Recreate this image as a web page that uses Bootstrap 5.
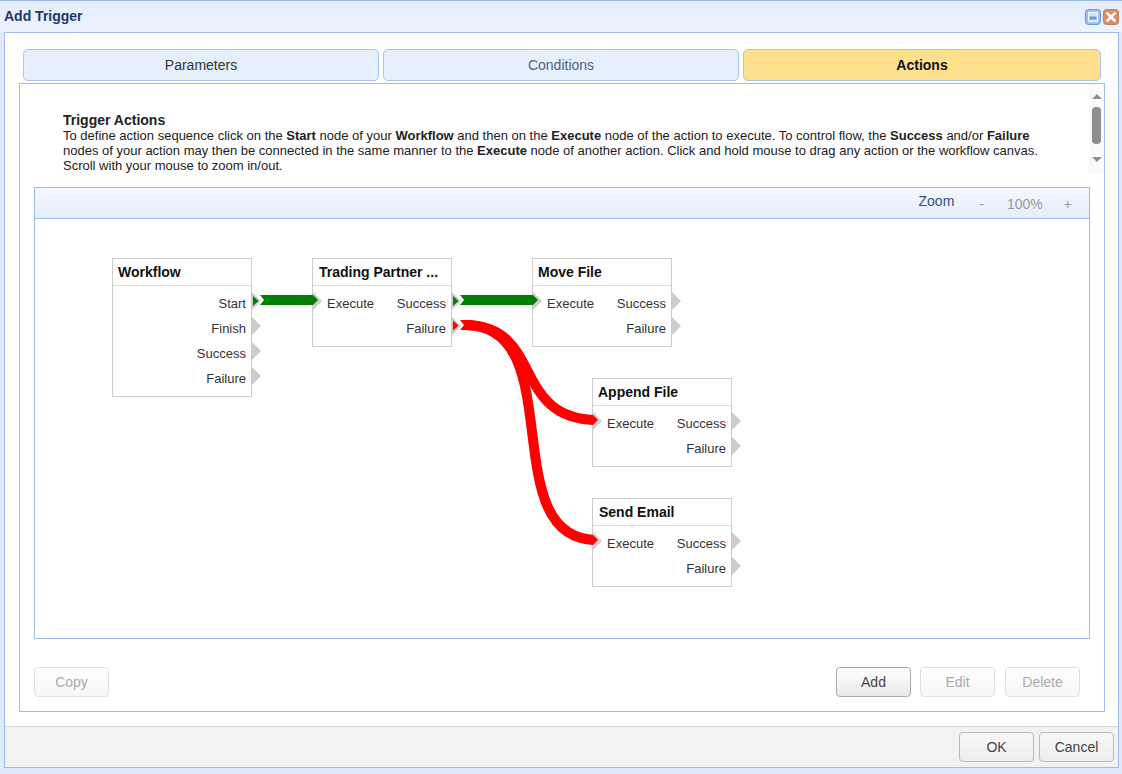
<!DOCTYPE html>
<html lang="en"><head><meta charset="utf-8"><title>Add Trigger</title>
<link href="https://cdn.jsdelivr.net/npm/bootstrap@5.3.0/dist/css/bootstrap.min.css" rel="stylesheet">
<style>
html,body{height:100%;margin:0;overflow:hidden;background:#dfeafc;font-family:"Liberation Sans",Arial,sans-serif;color:#333}
.dlg{width:1122px;height:774px;border-top:1px solid #9dbcea;background:#dfeafc}
.dlg-title{height:31px;padding:0 3px 0 4px;background:linear-gradient(#e4edfc,#edf3fe)}
.dlg-title h1{font-size:14px;font-weight:700;color:#1d3769;margin:0}
.win-btns{gap:2px}
.win-ico{width:16px;height:16px;display:block}
.dlg-main{width:1115px;height:736px;margin-left:4px;border:1px solid #9dbcea;background:#fff}
.dlg-body{height:693px;padding:16px 13px 14px 14px}
.tab-row{padding:0 4px;gap:4px}
.tab-btn{flex:0 0 356px;height:32px;padding:0;border:1px solid #a9c5ee;border-radius:5px;background:#e6effc;font-size:14px;line-height:30px;color:#333;font-family:inherit}
.tab-btn.is-mid{color:#4c6388}
.tab-btn.is-on{flex:1 1 0;background:#ffe08c;color:#111;font-weight:700}
.pnl{height:629px;margin-top:2px;border:1px solid #9dbcea;background:#fff}
.intro{height:90px}
.intro-txt{padding:28px 50px 0 43px;font-size:13px;line-height:15px;color:#222}
.intro-txt h2{font-size:14px;font-weight:700;margin:0;line-height:16px;color:#222}
.sbar{width:15px;background:#fafafa;padding-top:10px}
.sbar i{display:block;width:0;height:0;margin:0 auto;border:5px solid transparent;border-top:0;border-bottom:5px solid #8e8e8e}
.sbar i.dn{border-bottom:0;border-top:5px solid #8e8e8e;margin-top:13px}
.sbar span{display:block;width:9px;height:37px;margin:8px auto 0;border-radius:4px;background:#8e8e8e}
.cv{height:452px;margin:13px 14px 0;border:1px solid #9dbcea;background:#fff}
.cv-bar{height:31px;border-bottom:1px solid #9dbcea;background:linear-gradient(#f5f8fe,#e3edfc);padding:2px 17px 0 0;font-size:14px;color:#999}
.cv-bar .z-lbl{color:#33507f;margin-right:25px;position:relative;top:-3px}
.cv-bar .z-pct{margin:0 21px 0 23px}
.cv-stage{position:relative;height:419px}
.cv-stage svg{position:absolute;left:0;top:0}
.cv-stage svg.top-lyr{z-index:2;pointer-events:none}
.wf{position:absolute;width:140px;border:1px solid #ccc;background:#fff;font-size:13px;z-index:1}
.wf-h{height:27px;padding:0 5px;line-height:26px;border-bottom:1px solid #ddd;font-weight:700;font-size:14px;color:#111;white-space:nowrap;overflow:hidden}
.wf-h.pad-6{padding-left:6px}
.wf-b{padding:5px 5px 5px 14px}
.wf-r{height:25px;line-height:25px;position:relative;white-space:nowrap;color:#333}
.wf-out,.wf-in{position:absolute;top:1px;width:0;height:0;border-top:9px solid transparent;border-bottom:9px solid transparent;border-left:9px solid #ccc}
.wf-out{right:-15px}
.wf-in{left:-14px}
.n-wf{left:77px;top:39px}.n-tp{left:277px;top:39px}.n-mv{left:497px;top:39px}.n-ap{left:557px;top:159px}.n-se{left:557px;top:279px}
.btn-row{margin-top:28px;padding:0 24px 0 14px}
.act-grp{gap:9px}
.act-last{margin-left:1px}
.act{width:75px;height:30px;padding:0;font-size:14px;line-height:28px;border-radius:4px;border:1px solid #aaa;background:linear-gradient(#fff,#e9e9e9);color:#444;font-family:inherit}
.act:disabled{opacity:1;border-color:#e0e0e0;background:linear-gradient(#fff,#f6f6f6);color:#aaa}
.dlg-foot{height:41px;background:#f2f2f2;border-top:1px solid #d8d8d8;padding:5px 4px 0 0;gap:5px}
.dlg-foot .act{background:linear-gradient(#f8f8f8,#eee);border-color:#bbb}
</style></head>
<body>
<div class="dlg">
  <div class="dlg-title d-flex align-items-center justify-content-between">
    <h1>Add Trigger</h1>
    <div class="d-flex win-btns">
      <svg class="win-ico" viewBox="0 0 16 16"><rect x=".5" y=".5" width="15" height="15" rx="3" fill="#9cc0f0" stroke="#6f9bdb"/><rect x="3.500" y="3.500" width="9" height="9" fill="#cfe0f8" stroke="#f2f7ff"/><rect x="4.500" y="7.500" width="7" height="3" fill="#6f9bdb"/></svg>
      <svg class="win-ico" viewBox="0 0 16 16"><rect x=".5" y=".5" width="15" height="15" rx="3" fill="#dc8a6a" stroke="#c0805f"/><path d="M4.500 4.500l7 7M11.500 4.500l-7 7" stroke="#fff" stroke-width="2.6" stroke-linecap="square"/></svg>
    </div>
  </div>
  <div class="dlg-main d-flex flex-column">
    <div class="dlg-body">
      <div class="tab-row d-flex">
        <button type="button" class="btn tab-btn">Parameters</button>
        <button type="button" class="btn tab-btn is-mid">Conditions</button>
        <button type="button" class="btn tab-btn is-on">Actions</button>
      </div>
      <div class="pnl d-flex flex-column">
        <div class="intro d-flex">
          <div class="intro-txt flex-grow-1">
            <h2>Trigger Actions</h2>
            To define action sequence click on the <b>Start</b> node of your <b>Workflow</b> and then on the <b>Execute</b> node of the action to execute. To control flow, the <b>Success</b> and/or <b>Failure</b> nodes of your action may then be connected in the same manner to the <b>Execute</b> node of another action. Click and hold mouse to drag any action or the workflow canvas. Scroll with your mouse to zoom in/out.
          </div>
          <div class="sbar flex-shrink-0"><i></i><span></span><i class="dn"></i></div>
        </div>
        <div class="cv">
          <div class="cv-bar d-flex align-items-center justify-content-end">
            <span class="z-lbl">Zoom</span>
            <span>-</span><span class="z-pct">100%</span><span>+</span>
          </div>
          <div class="cv-stage">
            <svg width="1054" height="419" viewBox="35 219 1054 419">
              <g fill="none" stroke="#f00" stroke-width="10">
                <path d="M465 325C544 325 511 420 597 420"/>
                <path d="M465 325C572 325 493 540 597 540"/>
              </g>
              <path d="M460 320L464 325L460 330H470V320Z" fill="#f00"/>
              <path d="M260 295H313V305H260L264 300Z" fill="#008000"/>
              <path d="M460 295H533V305H460L464 300Z" fill="#008000"/>
            </svg>
            <div class="wf n-wf">
              <div class="wf-h">Workflow</div>
              <div class="wf-b text-end">
                <div class="wf-r">Start<span class="wf-out"></span></div>
                <div class="wf-r">Finish<span class="wf-out"></span></div>
                <div class="wf-r">Success<span class="wf-out"></span></div>
                <div class="wf-r">Failure<span class="wf-out"></span></div>
              </div>
            </div>
            <div class="wf n-tp">
              <div class="wf-h pad-6">Trading Partner ...</div>
              <div class="wf-b">
                <div class="wf-r d-flex justify-content-between"><span class="wf-in"></span><span>Execute</span><span>Success</span><span class="wf-out"></span></div>
                <div class="wf-r text-end">Failure<span class="wf-out"></span></div>
              </div>
            </div>
            <div class="wf n-mv">
              <div class="wf-h">Move File</div>
              <div class="wf-b">
                <div class="wf-r d-flex justify-content-between"><span class="wf-in"></span><span>Execute</span><span>Success</span><span class="wf-out"></span></div>
                <div class="wf-r text-end">Failure<span class="wf-out"></span></div>
              </div>
            </div>
            <div class="wf n-ap">
              <div class="wf-h">Append File</div>
              <div class="wf-b">
                <div class="wf-r d-flex justify-content-between"><span class="wf-in"></span><span>Execute</span><span>Success</span><span class="wf-out"></span></div>
                <div class="wf-r text-end">Failure<span class="wf-out"></span></div>
              </div>
            </div>
            <div class="wf n-se">
              <div class="wf-h pad-6">Send Email</div>
              <div class="wf-b">
                <div class="wf-r d-flex justify-content-between"><span class="wf-in"></span><span>Execute</span><span>Success</span><span class="wf-out"></span></div>
                <div class="wf-r text-end">Failure<span class="wf-out"></span></div>
              </div>
            </div>
            <svg class="top-lyr" width="1054" height="419" viewBox="35 219 1054 419">
              <path d="M253 296L258.500 301L253 306Z" fill="#008000"/>
              <path d="M453 296L458.500 301L453 306Z" fill="#008000"/>
              <path d="M453 320.500L458.500 325.500L453 330.500Z" fill="#f00"/>
              <path d="M311 295H313L318 300L313 305H311Z" fill="#008000"/>
              <path d="M531 295H533L538 300L533 305H531Z" fill="#008000"/>
              <path d="M591 415H593L598 420L593 425H591Z" fill="#f00"/>
              <path d="M591 535H593L598 540L593 545H591Z" fill="#f00"/>
            </svg>
          </div>
        </div>
        <div class="btn-row d-flex justify-content-between">
          <button type="button" class="btn act" disabled>Copy</button>
          <div class="d-flex act-grp">
            <button type="button" class="btn act">Add</button>
            <button type="button" class="btn act" disabled>Edit</button>
            <button type="button" class="btn act act-last" disabled>Delete</button>
          </div>
        </div>
      </div>
    </div>
    <div class="dlg-foot d-flex justify-content-end">
      <button type="button" class="btn act">OK</button>
      <button type="button" class="btn act">Cancel</button>
    </div>
  </div>
</div>
<script src="https://cdn.jsdelivr.net/npm/bootstrap@5.3.0/dist/js/bootstrap.bundle.min.js"></script>
</body></html>
